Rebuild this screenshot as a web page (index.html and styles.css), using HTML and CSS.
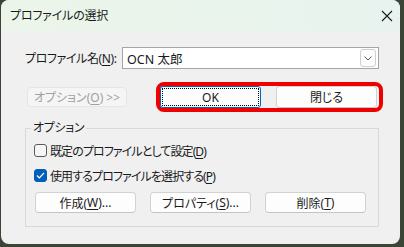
FILE: index.html
```html
<!DOCTYPE html>
<html lang="ja">
<head>
<meta charset="utf-8">
<link rel="stylesheet" href="styles.css">
</head>
<body>
<div class="window">
  <div class="titlebar">
    <span class="title">プロファイルの選択</span>
    <svg class="close" width="12" height="12" viewBox="0 0 12 12"><path d="M1 1 L11 11 M11 1 L1 11" stroke="#1a1a1a" stroke-width="1.1" fill="none"/></svg>
  </div>
  <div class="content">
    <div class="row-profile">
      <label class="label">プロファイル名(<u>N</u>):</label>
      <div class="combo">
        <span class="combo-text">OCN 太郎</span>
        <span class="combo-btn"><svg width="8" height="5" viewBox="0 0 8 5"><path d="M0.5 0.5 L4 4 L7.5 0.5" stroke="#555" stroke-width="1" fill="none"/></svg></span>
      </div>
    </div>
    <div class="row-actions">
      <button class="btn btn-disabled btn-options">オプション(<u>O</u>) &gt;&gt;</button>
      <div class="highlight">
        <button class="btn btn-focus"><span class="focus-ring">OK</span></button>
        <button class="btn">閉じる</button>
      </div>
    </div>
    <fieldset class="group">
      <legend class="legend">オプション</legend>
      <div class="check-row">
        <span class="checkbox"></span>
        <span class="check-label">既定のプロファイルとして設定(<u>D</u>)</span>
      </div>
      <div class="check-row">
        <span class="checkbox checked"><svg width="9" height="7" viewBox="0 0 9 7"><path d="M1 3.5 L3.3 5.8 L8 1" stroke="#fff" stroke-width="1.2" fill="none"/></svg></span>
        <span class="check-label">使用するプロファイルを選択する(<u>P</u>)</span>
      </div>
      <div class="btn-row">
        <button class="btn btn-small">作成(<u>W</u>)...</button>
        <button class="btn btn-small">プロパティ(<u>S</u>)...</button>
        <button class="btn btn-small">削除(<u>T</u>)</button>
      </div>
    </fieldset>
  </div>
</div>
</body>
</html>
```

FILE: styles.css
```css
html, body {
  margin: 0;
  padding: 0;
}
body {
  background: #3a4536;
  width: 404px;
  height: 247px;
  overflow: hidden;
  font-family: "Noto Sans", "Noto Sans CJK JP", sans-serif;
  font-size: 12px;
  color: #1a1a1a;
  font-feature-settings: "palt";
}
.window {
  margin-left: 1px;
  width: 399px;
  height: 244px;
  background: #f0f0f0;
  border-radius: 8px;
  overflow: hidden;
  display: flex;
  flex-direction: column;
}
.titlebar {
  height: 31px;
  flex: none;
  background: linear-gradient(90deg, #ebf5e9, #e8f3ef);
  display: flex;
  align-items: center;
  justify-content: space-between;
  padding: 0 7px 0 9px;
}
.title {
  font-size: 12px;
  color: #1a1a1a;
  line-height: 1;
  letter-spacing: -0.2px;
}
.close {
  display: block;
}
.content {
  padding: 16px 21px 0 24px;
  display: flex;
  flex-direction: column;
}
.row-profile {
  display: flex;
  align-items: center;
  height: 22px;
}
.label {
  width: 97px;
  flex: none;
  letter-spacing: -0.4px;
}
u {
  text-decoration: underline;
  text-underline-offset: 2px;
}
.combo {
  flex: 1;
  height: 22px;
  box-sizing: border-box;
  border: 1px solid #a5a5a5;
  background: #fff;
  display: flex;
  align-items: center;
  justify-content: space-between;
  padding: 0 2px 0 4px;
}
.combo-text {
  font-size: 12.5px;
}
.combo-btn {
  width: 16px;
  height: 18px;
  box-sizing: border-box;
  border: 1px solid #d0d0d0;
  border-radius: 3px;
  background: #fdfdfd;
  display: flex;
  align-items: center;
  justify-content: center;
}
.row-actions {
  display: flex;
  align-items: center;
  margin-top: 13px;
}
.btn {
  font: inherit;
  font-size: 12px;
  color: #1a1a1a;
  background: #fdfdfd;
  border: 1px solid #d2d2d2;
  border-bottom-color: #c4c4c4;
  border-radius: 4px;
  height: 22px;
  width: 101px;
  flex: none;
  padding: 0;
  display: flex;
  align-items: center;
  justify-content: center;
  box-sizing: border-box;
}
.btn-options {
  width: 100px;
  height: 20px;
  margin-left: 2px;
  margin-right: 29px;
}
.btn-disabled {
  color: #a0a0a0;
  background: #f5f5f5;
  border-color: #e5e5e5;
}
.highlight {
  flex: none;
  border: 4px solid #ee0000;
  border-radius: 8px;
  padding: 0 2px 0 0;
  display: flex;
  gap: 15px;
}
.btn-focus {
  border: 1px solid #0067c0;
  border-radius: 3px;
  padding: 1px;
}
.focus-ring {
  width: 100%;
  height: 100%;
  box-sizing: border-box;
  border: 1px dotted #000;
  display: flex;
  align-items: center;
  justify-content: center;
}
.group {
  margin: 8px 0 0 0;
  border: 1px solid #d9d9d9;
  padding: 6px 9px 13px 8px;
  min-width: 0;
  width: 354px;
  box-sizing: border-box;
}
.legend {
  padding: 0 2px;
  margin-left: -3px;
  line-height: 16px;
  letter-spacing: -0.3px;
}
.check-row {
  display: flex;
  align-items: center;
  height: 17px;
  gap: 3px;
  margin-bottom: 8px;
}
.check-label {
  letter-spacing: -0.9px;
}
.checkbox {
  width: 13px;
  height: 13px;
  box-sizing: border-box;
  border: 1px solid #5a5a5a;
  border-radius: 3px;
  background: #f6f6f6;
  display: flex;
  align-items: center;
  justify-content: center;
  flex: none;
}
.checkbox.checked {
  background: #005fb8;
  border-color: #005fb8;
}
.btn-row {
  display: flex;
  gap: 14px;
  margin-top: 2px;
  margin-left: 1px;
}
.btn-small {
  height: 21px;
}
```
